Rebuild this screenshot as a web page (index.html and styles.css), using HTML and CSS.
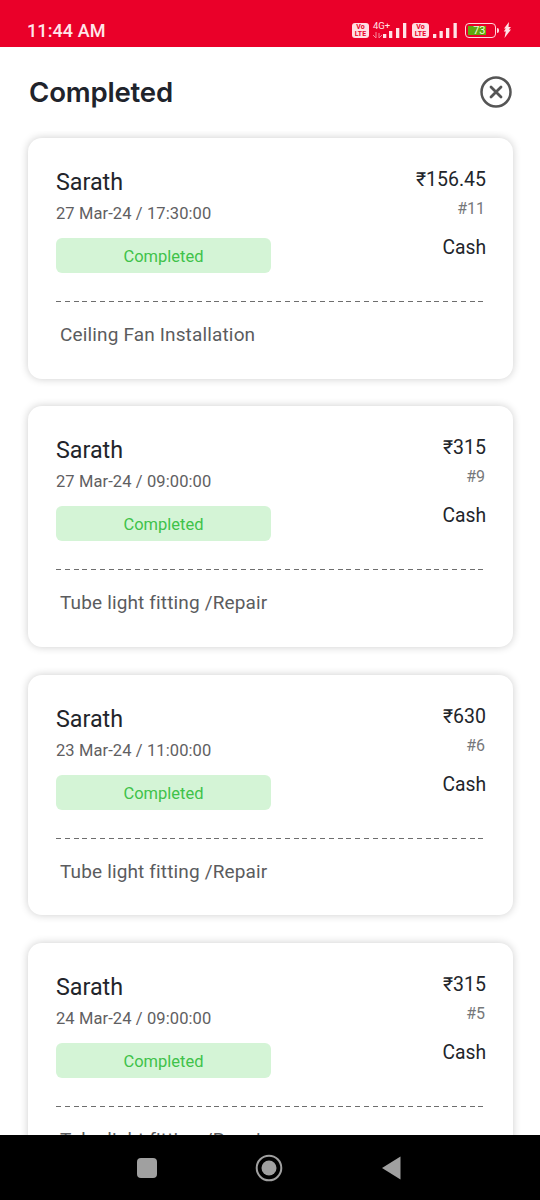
FILE: index.html
```html
<!DOCTYPE html>
<html lang="en">
<head>
<meta charset="utf-8">
<title>Completed</title>
<link rel="stylesheet" href="styles.css">
</head>
<body>
<div class="phone">
  <div class="status">
    <span class="time">11:44 AM</span>
    <div class="status-icons">
      <span class="volte">Vo<br>LTE</span>
      <span class="net">
        <span class="net-label">4G+</span>
        <svg class="bars-first" width="39" height="24" viewBox="0 0 39 24"><path d="M7 16v6M4 19l3 3M10 17v5M13 19l-3 3" stroke="#f58a9c" stroke-width="1" fill="none"/><path d="M14 18h3.300v4H14zM20 15h3.300v7H20zM27 12h3.300v10H27zM34 7h3.300v15H34z" fill="#ffe3e7"/></svg>
      </span>
      <span class="volte">Vo<br>LTE</span>
      <svg class="bars" width="24" height="16" viewBox="0 0 24 16"><path d="M0 12h3.300v4H0zM6.500 9h3.300v7H6.500zM13 6h3.300v10H13zM20.500 1h3.300v15h-3.300z" fill="#ffe3e7"/></svg>
      <span class="battery"><span class="battery-fill">73</span></span>
      <span class="battery-tip"></span>
      <svg class="bolt" width="9" height="16" viewBox="0 0 9 16"><path d="M6 0L1 6.500h1.800L0.800 9.500h2L1.500 16 8 7.500H5.800L8 5H5.500z" fill="#ffe3e7"/></svg>
    </div>
  </div>
  <div class="header">
    <h1 class="title">Completed</h1>
    <svg class="close" width="34" height="34" viewBox="0 0 34 34"><circle cx="17" cy="17" r="14.500" fill="none" stroke="#555" stroke-width="2.500"/><path d="M12 12l10 10M22 12l-10 10" stroke="#555" stroke-width="2.800" stroke-linecap="round"/></svg>
  </div>
  <div class="list">
    <article class="card">
      <div class="top">
        <div class="left">
          <div class="name">Sarath</div>
          <div class="date">27 Mar-24 / 17:30:00</div>
          <div class="badge">Completed</div>
        </div>
        <div class="right">
          <div class="amount">₹156.45</div>
          <div class="num">#11</div>
          <div class="pay">Cash</div>
        </div>
      </div>
      <div class="dash"></div>
      <div class="service">Ceiling Fan Installation</div>
    </article>
    <article class="card">
      <div class="top">
        <div class="left">
          <div class="name">Sarath</div>
          <div class="date">27 Mar-24 / 09:00:00</div>
          <div class="badge">Completed</div>
        </div>
        <div class="right">
          <div class="amount">₹315</div>
          <div class="num">#9</div>
          <div class="pay">Cash</div>
        </div>
      </div>
      <div class="dash"></div>
      <div class="service">Tube light fitting /Repair</div>
    </article>
    <article class="card">
      <div class="top">
        <div class="left">
          <div class="name">Sarath</div>
          <div class="date">23 Mar-24 / 11:00:00</div>
          <div class="badge">Completed</div>
        </div>
        <div class="right">
          <div class="amount">₹630</div>
          <div class="num">#6</div>
          <div class="pay">Cash</div>
        </div>
      </div>
      <div class="dash"></div>
      <div class="service">Tube light fitting /Repair</div>
    </article>
    <article class="card">
      <div class="top">
        <div class="left">
          <div class="name">Sarath</div>
          <div class="date">24 Mar-24 / 09:00:00</div>
          <div class="badge">Completed</div>
        </div>
        <div class="right">
          <div class="amount">₹315</div>
          <div class="num">#5</div>
          <div class="pay">Cash</div>
        </div>
      </div>
      <div class="dash"></div>
      <div class="service">Tube light fitting /Repair</div>
    </article>
  </div>
  <div class="nav">
    <span class="nav-square"></span>
    <svg width="28" height="28" viewBox="0 0 28 28"><circle cx="14" cy="14" r="12.300" fill="none" stroke="#a0a0a0" stroke-width="2"/><circle cx="14" cy="14" r="7.500" fill="#a0a0a0"/></svg>
    <svg class="nav-back" width="20" height="24" viewBox="0 0 20 24"><path d="M19.500 0.500v23L1 12z" fill="#a0a0a0"/></svg>
  </div>
</div>
</body>
</html>
```
FILE: styles.css
```css
* { box-sizing: border-box; }
html, body { margin: 0; padding: 0; background: #fff; }
.phone {
  width: 540px;
  height: 1200px;
  display: flex;
  flex-direction: column;
  overflow: hidden;
  font-family: Roboto, "Noto Sans", sans-serif;
  background: #fff;
}
.status {
  flex: none;
  height: 47px;
  background: #ea0029;
  display: flex;
  align-items: flex-end;
  justify-content: space-between;
  padding: 0 28px 6px 27px;
  color: #ffe6ea;
}
.time { font-size: 18px; font-weight: 500; line-height: 21px; letter-spacing: 0.1px; }
.status-icons { display: flex; align-items: flex-end; height: 24px; margin-bottom: 1px; }
.volte {
  width: 17px;
  height: 15px;
  margin-bottom: 2px;
  padding-top: 1px;
  background: #ffdfe3;
  border-radius: 3px;
  color: #ea0029;
  font-size: 7px;
  font-weight: 700;
  line-height: 6.500px;
  text-align: center;
}
.net { position: relative; width: 39px; height: 24px; margin-right: 4px; }
.net-label { position: absolute; left: 4px; top: 5px; font-size: 9.500px; line-height: 10px; color: #ffe3e7; }
.bars-first { display: block; }
.bars { margin: 0 8px 2px 4px; }
.battery {
  width: 31px;
  height: 15px;
  margin-bottom: 2px;
  border: 1.500px solid #ffd7dc;
  border-radius: 4px;
  padding: 1.500px;
  display: block;
}
.battery-fill {
  display: block;
  width: 18px;
  height: 9px;
  background: #5ea80e;
  color: #f2ffd8;
  font-size: 11px;
  font-weight: 400;
  line-height: 9px;
  text-align: right;
}
.battery-tip { width: 2px; height: 5px; margin: 0 4px 7px 1px; background: #ffd7dc; border-radius: 0 2px 2px 0; }
.bolt { margin-bottom: 2px; }
.header {
  flex: none;
  height: 84px;
  display: flex;
  align-items: center;
  justify-content: space-between;
  padding: 6px 27px 0 29px;
}
.title {
  margin: 0;
  font-family: Inter, Roboto, sans-serif;
  font-size: 27.600px;
  font-weight: 600;
  color: #20232b;
  letter-spacing: -0.2px;
}
.close { display: block; }
.list {
  flex: 1 1 0;
  min-height: 0;
  overflow: hidden;
  display: flex;
  flex-direction: column;
  gap: 27.800px;
  padding: 7px 27px 0 28px;
}
.card {
  flex: none;
  height: 240.500px;
  background: #fff;
  border-radius: 14px;
  box-shadow: 0 0 8px rgba(0, 0, 0, 0.2);
  padding: 28px 27px 0 28px;
}
.top { display: flex; justify-content: space-between; height: 107px; }
.name { font-size: 23.300px; line-height: 32px; color: #22252b; }
.date { margin-top: 6px; font-size: 16.500px; line-height: 20px; color: #5f6062; letter-spacing: 0.1px; }
.badge {
  width: 215px;
  height: 35px;
  margin-top: 14px;
  background: #d4f4d6;
  border-radius: 6px;
  color: #3fc24a;
  font-size: 16.500px;
  line-height: 37px;
  text-align: center;
}
.right { text-align: right; }
.amount { font-size: 19.500px; line-height: 28px; color: #22252b; }
.num { margin: 5px 1px 0 0; font-size: 16px; line-height: 20px; color: #76787a; }
.pay { margin-top: 16px; font-size: 19.300px; line-height: 26px; color: #22252b; }
.dash {
  margin-top: 28px;
  width: 428px;
  height: 1px;
  background: repeating-linear-gradient(to right, #6e6e6e 0 5px, transparent 5px 8.800px);
}
.service { margin: 21px 0 0 4px; font-size: 19px; line-height: 24px; color: #5b5c5e; letter-spacing: 0.15px; }
.nav {
  flex: none;
  height: 65px;
  background: #000;
  display: flex;
  align-items: center;
  justify-content: center;
  padding-right: 2px;
}
.nav-square { width: 20px; height: 20px; background: #a0a0a0; border-radius: 4px; margin-right: 98px; }
.nav-back { margin-left: 98px; }
```
